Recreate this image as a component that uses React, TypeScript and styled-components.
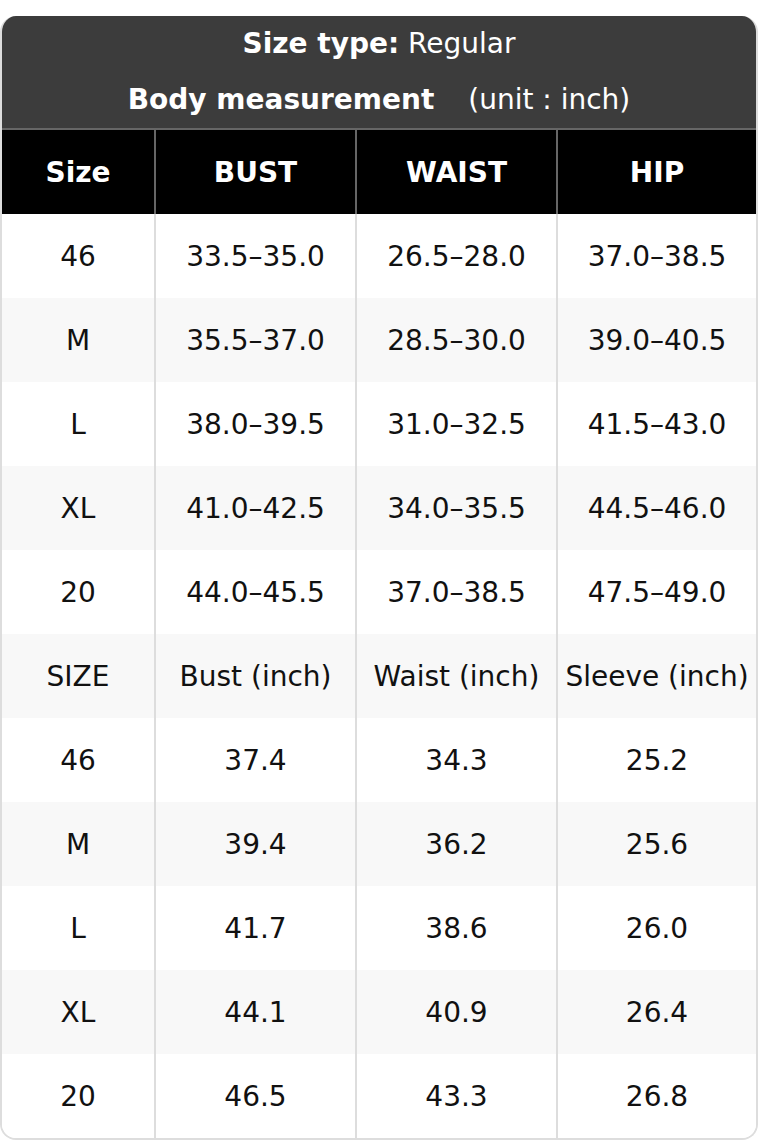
import React from 'react';
import styled, { createGlobalStyle } from 'styled-components';

/**
 * Size chart: caption band, black header row, striped body rows
 */

const GlobalStyle = createGlobalStyle`
  html, body {
    margin: 0;
    padding: 0;
    background: #ffffff;
  }
  body {
    font-family: "DejaVu Sans", "Liberation Sans", sans-serif;
  }
`;

const Page = styled.div`
  padding: 16px 2px 0 0;
`;

const Chart = styled.div`
  border: 2px solid #dddddd;
  border-top: none;
  border-radius: 16px;
  overflow: hidden;
  background: #ffffff;
`;

// Caption band
const Caption = styled.div`
  background: #3c3c3c;
  color: #ffffff;
  text-align: center;
  font-size: 28px;
  line-height: 56px;
  border-bottom: 2px solid #666666;
  margin: 0 -2px;
`;

const CaptionLine = styled.div`
  white-space: nowrap;
`;

const Strong = styled.b`
  font-weight: 700;
`;

const Unit = styled.span`
  margin-left: 34px;
`;

// Table
const Table = styled.table`
  width: 100%;
  border-collapse: collapse;
  table-layout: fixed;
  font-size: 28px;
`;

const HeadCell = styled.th`
  background: #000000;
  color: #ffffff;
  font-weight: 700;
  height: 84px;
  padding: 0;
  text-align: center;
  & + & {
    border-left: 2px solid #666666;
  }
`;

const Row = styled.tr<{ $striped: boolean }>`
  background: ${(p) => (p.$striped ? '#f8f8f8' : '#ffffff')};
`;

const Cell = styled.td`
  height: 84px;
  padding: 0;
  text-align: center;
  color: #111111;
  white-space: nowrap;
  & + & {
    border-left: 2px solid #dddddd;
  }
`;

const columns = [153, 201, 201];

const heads = ['Size', 'BUST', 'WAIST', 'HIP'];

const rows: string[][] = [
  ['46', '33.5–35.0', '26.5–28.0', '37.0–38.5'],
  ['M', '35.5–37.0', '28.5–30.0', '39.0–40.5'],
  ['L', '38.0–39.5', '31.0–32.5', '41.5–43.0'],
  ['XL', '41.0–42.5', '34.0–35.5', '44.5–46.0'],
  ['20', '44.0–45.5', '37.0–38.5', '47.5–49.0'],
  ['SIZE', 'Bust (inch)', 'Waist (inch)', 'Sleeve (inch)'],
  ['46', '37.4', '34.3', '25.2'],
  ['M', '39.4', '36.2', '25.6'],
  ['L', '41.7', '38.6', '26.0'],
  ['XL', '44.1', '40.9', '26.4'],
  ['20', '46.5', '43.3', '26.8'],
];

const App: React.FC = () => (
  <>
    <GlobalStyle />
    <Page>
      <Chart>
        <Caption>
          <CaptionLine>
            <Strong>Size type:</Strong> Regular
          </CaptionLine>
          <CaptionLine>
            <Strong>Body measurement</Strong>
            <Unit>(unit : inch)</Unit>
          </CaptionLine>
        </Caption>

        <Table>
          <colgroup>
            {columns.map((w, i) => (
              <col key={i} style={{ width: w }} />
            ))}
            <col />
          </colgroup>
          <thead>
            <tr>
              {heads.map((h) => (
                <HeadCell key={h}>{h}</HeadCell>
              ))}
            </tr>
          </thead>
          <tbody>
            {rows.map((r, i) => (
              <Row key={i} $striped={i % 2 === 1}>
                {r.map((c, j) => (
                  <Cell key={j}>{c}</Cell>
                ))}
              </Row>
            ))}
          </tbody>
        </Table>
      </Chart>
    </Page>
  </>
);

export default App;
